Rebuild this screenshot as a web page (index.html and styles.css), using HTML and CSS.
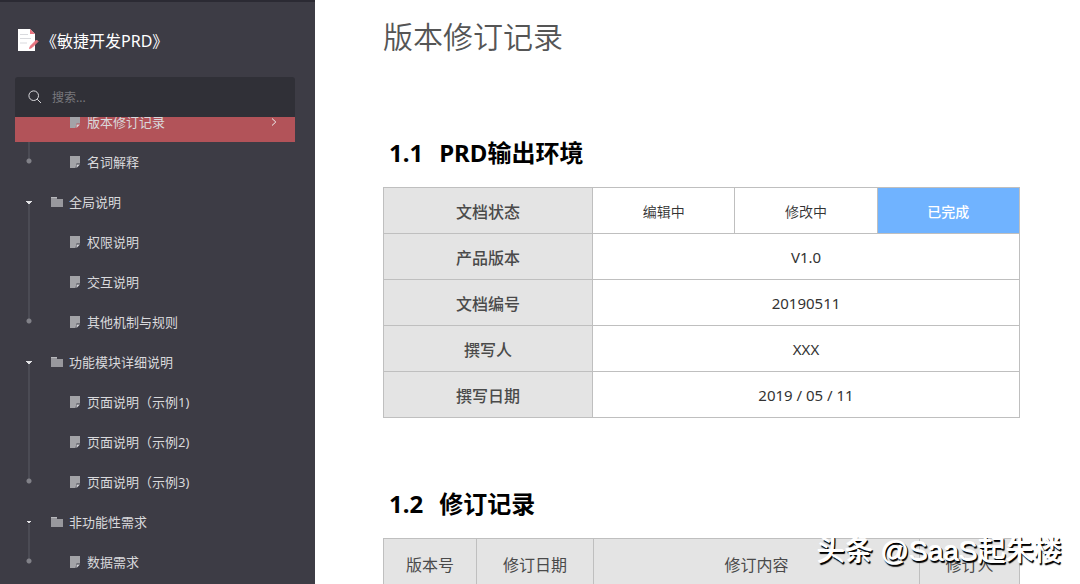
FILE: index.html
```html
<!DOCTYPE html>
<html lang="zh-CN">
<head>
  <meta charset="UTF-8" />
  <meta name="viewport" content="width=device-width, initial-scale=1.0" />
  <title>敏捷开发PRD</title>
  <link rel="stylesheet" href="styles.css">
</head>
<body>
  <!-- Shared icons -->
  <svg class="sprite" aria-hidden="true">
    <symbol id="page" viewBox="0 0 10 12">
      <path d="M0 0H10V7.500H6.500L5.500 12H0Z" fill="#a3a3a7" />
      <path d="M10 8.500L6.500 12V8.500Z" fill="#d6d6da" />
    </symbol>
    <symbol id="folder" viewBox="0 0 12 10">
      <path d="M0 0H6V2H12V10H0Z" fill="#98989d" />
      <path d="M0 0H6V1H0Z" fill="#b9b9bd" />
    </symbol>
  </svg>

  <div class="layout">
    <aside class="sidebar">
      <div class="brand">
        <svg class="logo" viewBox="0 0 24 22" aria-hidden="true">
          <path d="M3 0H15L20 5V22H3Z" fill="#fff" />
          <path d="M15 0L20 5H15Z" fill="#e9737f" />
          <path d="M5 5.500H13M5 9.500H16M5 14H12" stroke="#d9dade" stroke-width="1" />
          <path d="M21.500 11L23 12.500L17 18.500L14.500 19.500L15.500 17Z" fill="#e9737f" stroke="#e9737f" />
        </svg>
        <span>《敏捷开发PRD》</span>
      </div>

      <label class="search">
        <svg viewBox="0 0 14 14" aria-hidden="true">
          <circle cx="5.700" cy="5.700" r="4.800" />
          <path d="M9.200 9.200L13 13" />
        </svg>
        <input type="text" placeholder="搜索..." aria-label="搜索" />
      </label>

      <nav class="tree">
        <ul class="group">
          <li class="doc active"><a href="#"><svg><use href="#page" /></svg><span>版本修订记录</span><svg class="chevron" viewBox="0 0 6 8"><path d="M1 0.500L4.800 4L1 7.500" /></svg></a></li>
          <li class="doc last"><a href="#"><svg><use href="#page" /></svg><span>名词解释</span></a></li>
        </ul>
        <ul class="group">
          <li class="folder"><a href="#"><svg><use href="#folder" /></svg><span>全局说明</span></a></li>
          <li class="doc"><a href="#"><svg><use href="#page" /></svg><span>权限说明</span></a></li>
          <li class="doc"><a href="#"><svg><use href="#page" /></svg><span>交互说明</span></a></li>
          <li class="doc last"><a href="#"><svg><use href="#page" /></svg><span>其他机制与规则</span></a></li>
        </ul>
        <ul class="group">
          <li class="folder"><a href="#"><svg><use href="#folder" /></svg><span>功能模块详细说明</span></a></li>
          <li class="doc"><a href="#"><svg><use href="#page" /></svg><span>页面说明（示例1)</span></a></li>
          <li class="doc"><a href="#"><svg><use href="#page" /></svg><span>页面说明（示例2)</span></a></li>
          <li class="doc last"><a href="#"><svg><use href="#page" /></svg><span>页面说明（示例3)</span></a></li>
        </ul>
        <ul class="group">
          <li class="folder"><a href="#"><svg><use href="#folder" /></svg><span>非功能性需求</span></a></li>
          <li class="doc last"><a href="#"><svg><use href="#page" /></svg><span>数据需求</span></a></li>
        </ul>
      </nav>
    </aside>

    <main class="content">
      <h1>版本修订记录</h1>

      <section>
        <h2><span>1.1</span>PRD输出环境</h2>
        <table class="info">
          <colgroup><col class="w-label"><col><col><col></colgroup>
          <tr><th scope="row">文档状态</th><td class="state">编辑中</td><td class="state">修改中</td><td class="state done">已完成</td></tr>
          <tr><th scope="row">产品版本</th><td colspan="3">V1.0</td></tr>
          <tr><th scope="row">文档编号</th><td colspan="3">20190511</td></tr>
          <tr><th scope="row">撰写人</th><td colspan="3">XXX</td></tr>
          <tr><th scope="row">撰写日期</th><td colspan="3">2019 / 05 / 11</td></tr>
        </table>
      </section>

      <section>
        <h2><span>1.2</span>修订记录</h2>
        <table class="history">
          <colgroup><col class="w-version"><col class="w-date"><col><col class="w-author"></colgroup>
          <tr><th scope="col">版本号</th><th scope="col">修订日期</th><th scope="col">修订内容</th><th scope="col">修订人</th></tr>
        </table>
      </section>
    </main>
  </div>

  <div class="watermark">头条 @SaaS起朱楼</div>
</body>
</html>
```

FILE: styles.css
```css
* {
  box-sizing: border-box;
}

body {
  margin: 0;
  background: #fff;
  font-family: "Noto Sans", "Noto Sans CJK SC", sans-serif;
}

.sprite {
  display: none;
}

.layout {
  display: flex;
  height: 100vh;
  overflow: hidden;
}

/* Sidebar */
.sidebar {
  display: flex;
  flex-direction: column;
  flex: none;
  width: 315px;
  padding: 0 20px 0 15px;
  background: #3d3c45;
  border-top: 2px solid #2b2a33;
}

.brand {
  display: flex;
  align-items: center;
  flex: none;
  height: 75px;
  gap: 2px;
  color: #fff;
  font-size: 16px;
}

.logo {
  width: 24px;
  height: 22px;
}

.search {
  display: flex;
  align-items: center;
  flex: none;
  gap: 10px;
  height: 40px;
  padding: 0 13px;
  background: #303037;
  border-radius: 3px 3px 0 0;
}

.search svg {
  width: 14px;
  height: 14px;
  fill: none;
  stroke: #d8d8dc;
}

.search input {
  flex: 1;
  min-width: 0;
  padding: 0;
  border: 0;
  outline: 0;
  background: none;
  color: #ddd;
  font: 12px "Noto Sans", "Noto Sans CJK SC", sans-serif;
}

.search input::placeholder {
  color: #78787d;
}

.tree {
  flex: 1;
  min-height: 0;
  overflow: hidden;
}

.group {
  margin: 0;
  padding: 0;
  list-style: none;
}

/* list is scrolled a little under the search box */
.group:first-child {
  margin-top: -15px;
}

.tree li {
  display: flex;
  height: 40px;
}

/* guide line, dot and arrow in the left gutter */
.tree li::before {
  content: "";
  flex: none;
  width: 28px;
  background: linear-gradient(#4b4b54, #4b4b54) 13px 0 / 2px 100% no-repeat;
}

.tree .last::before {
  background:
    radial-gradient(circle at 14px 19px, #818188 2px, transparent 3px),
    linear-gradient(#4b4b54, #4b4b54) 13px 0 / 2px 19px no-repeat;
}

.tree .folder::before {
  background:
    conic-gradient(from -45deg at 50% 100%, #e2e2e5 90deg, transparent 0) 11px 19px / 6px 3px no-repeat,
    linear-gradient(#4b4b54, #4b4b54) 13px 22px / 2px 18px no-repeat;
}

.tree a {
  display: flex;
  align-items: center;
  flex: 1;
  gap: 6px;
  padding-left: 8px;
  color: #d9d9dc;
  font-size: 13px;
  text-decoration: none;
}

.tree a span {
  padding-bottom: 2px;
}

.tree .doc a {
  gap: 7px;
  padding-left: 27px;
}

.tree a svg {
  width: 12px;
  height: 10px;
}

.tree .doc a svg {
  width: 10px;
  height: 12px;
}

.tree .active {
  background: #b25359;
}

.tree .active::before {
  background: none;
}

.tree .doc a .chevron {
  width: 6px;
  height: 8px;
  margin-left: auto;
  margin-right: 18px;
  fill: none;
  stroke: #eee;
}

/* Document */
.content {
  flex: 1;
  min-width: 0;
  padding: 13px 60px 0 68px;
  overflow: hidden;
}

h1 {
  margin: 0 0 76px;
  color: #555;
  font-size: 30px;
  font-weight: 350;
  line-height: 48px;
}

h2 {
  display: flex;
  gap: 16px;
  margin: 0 0 18px;
  padding-left: 6px;
  color: #000;
  font-size: 24px;
  font-weight: 700;
  line-height: 32px;
}

section {
  margin-bottom: 70px;
}

table {
  width: 100%;
  border-collapse: collapse;
  table-layout: fixed;
}

th,
td {
  height: 46px;
  padding: 0;
  border: 1px solid #bfbfbf;
  text-align: center;
}

th {
  background: #e4e4e4;
  color: #4a4a4a;
  font-size: 16px;
  font-weight: 500;
}

td {
  color: #333;
  font-size: 15px;
}

.history th {
  height: 50px;
  font-weight: 400;
}

.state {
  font-size: 14px;
  font-weight: 350;
}

.done {
  background: #70b3ff;
  color: #fff;
  font-weight: 500;
}

.w-label {
  width: 209px;
}

.w-version {
  width: 93px;
}

.w-date {
  width: 117px;
}

.w-author {
  width: 100px;
}

/* Overlay */
.watermark {
  position: absolute;
  right: 18px;
  bottom: 12px;
  color: #fff;
  font-family: "Liberation Sans", "Noto Sans CJK SC", sans-serif;
  font-size: 28px;
  line-height: 40px;
  text-shadow: -1px -1px 0 #fff, 1px 2px 1px #000, 1px 1px 0 #000;
  white-space: nowrap;
}
```
